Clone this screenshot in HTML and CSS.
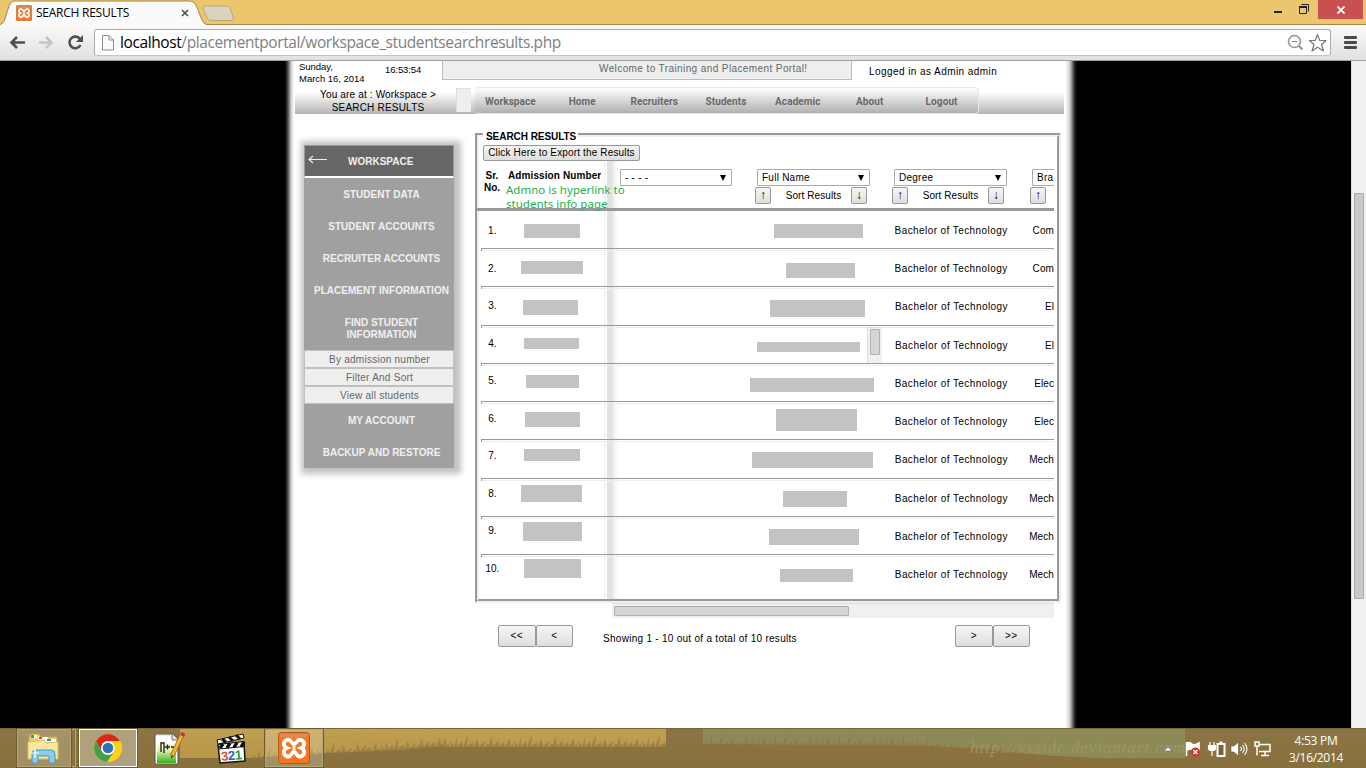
FILE: index.html
```html
<!DOCTYPE html>
<html lang="en">
<head>
<meta charset="utf-8">
<title>SEARCH RESULTS</title>
<link rel="stylesheet" href="styles.css">
</head>
<body>
<svg width="0" height="0" class="defs" aria-hidden="true">
  <symbol id="xampp" viewBox="0 0 32 32">
    <rect x=".5" y=".5" width="31" height="31" rx="3" fill="#f37623" stroke="#b5561b"/>
    <path d="M2 2h28v3q-14 3-28 0z" fill="#d9935d" opacity=".7"/>
    <path d="M9 8C13 6.500 13.500 12 16 12S19 6.500 23 8C28 10 26 15 23.500 16C26 17 28 22 23 24.500C19 26 18.500 20 16 20S13 26 9 24.500C4 22 6 17 8.500 16C6 15 4 10 9 8Z" fill="none" stroke="#fff" stroke-width="3.800"/>
    <path d="M14.500 16h3" stroke="#fff" stroke-width="4.500"/>
  </symbol>
</svg>
<div class="browser">
  <header class="tabstrip">
    <svg class="tabshape" width="240" height="25" viewBox="0 0 240 25">
      <path d="M0 24.500Q3 24 4.500 20L9 6Q11 1 14 1H190Q194 1 196 5L202 20Q204 24.500 207 24.500V26H0Z" fill="#fafafa" stroke="#a58748"/>
      <path d="M203 8Q203 6 205 6H227Q229 6 230 8L233.500 18Q234 20.500 232 20.500H211Q208 20.500 207 18Z" fill="#d8d3c1" stroke="#b9a878"/>
    </svg>
    <div class="tab">
      <svg width="16" height="16"><use href="#xampp"/></svg>
      <span class="tabtitle">SEARCH RESULTS</span>
      <svg class="tabclose" width="8" height="8" viewBox="0 0 8 8"><path d="M1 1l6 6M7 1L1 7" stroke="#555" stroke-width="1.700"/></svg>
    </div>
    <div class="winbtns">
      <svg width="35" height="19" viewBox="0 0 35 19"><path d="M0 12h8" stroke="#222" stroke-width="2"/><path d="M25.500 6.500h7v7h-7v-7z M27.500 4.500h7V11.500" fill="none" stroke="#222"/><path d="M25 7h8" stroke="#222" stroke-width="2"/></svg>
      <div class="winclose"><svg width="8" height="8" viewBox="0 0 8 8"><path d="M.5.5l7 7M7.500.5l-7 7" stroke="#fff" stroke-width="1.800"/></svg></div>
    </div>
  </header>
  <div class="toolbar">
    <svg width="84" height="36" viewBox="0 0 84 36">
      <path d="M17 12l-5.500 5.500L17 23M12 17.500h13" fill="none" stroke="#505050" stroke-width="2.600"/>
      <path d="M46 12l5.500 5.500L46 23M51 17.500H39" fill="none" stroke="#c6c6c6" stroke-width="2.600"/>
      <path d="M80 14A5.800 5.800 0 1 0 80.500 20" fill="none" stroke="#505050" stroke-width="2.600"/><path d="M83 10v7h-7z" fill="#505050"/>
    </svg>
    <div class="omnibox">
      <svg width="12" height="16" viewBox="0 0 12 16"><path d="M.5.5h6.500l4.500 4.500v10H.5zM7 .5V5h4.500" fill="#fbfbfb" stroke="#8d8d8d"/></svg>
      <div class="url"><b>localhost</b>/placementportal/workspace_studentsearchresults.php</div>
      <svg width="40" height="20" viewBox="0 0 40 20"><circle cx="7.500" cy="8.500" r="6" fill="#fafafa" stroke="#999" stroke-width="1.600"/><path d="M12 13l3.500 3.500" stroke="#999" stroke-width="2.400"/><path d="M5 8.500h5" stroke="#888"/><path d="M30.500 1.500l2.300 6H39l-4.500 4 2 6.500-6-3.800-5.500 3.800 2-6.500-4.500-4h5.700z" fill="#fff" stroke="#777" stroke-width="1.200" stroke-linejoin="round"/></svg>
    </div>
    <div class="menu"><i></i><i></i><i></i></div>
  </div>

  <div class="viewport">
    <main class="page">
      <div class="top">
        <div class="toprow">
          <div class="date">Sunday,<br>March 16, 2014</div>
          <div class="time">16:53:54</div>
          <div class="welcome">Welcome to Training and Placement Portal!</div>
          <div class="logged">Logged in as Admin admin</div>
        </div>
        <div class="navrow">
          <div class="crumbs"><span class="c1">You are at : Workspace &gt;</span><span class="c2">SEARCH RESULTS</span></div>
          <div class="stub"></div>
          <nav class="nav"><a>Workspace</a><a>Home</a><a>Recruiters</a><a>Students</a><a>Academic</a><a>About</a><a>Logout</a></nav>
        </div>
      </div>
      <div class="main">
        <aside class="side">
          <div class="sidehead"><svg width="19" height="9" viewBox="0 0 19 9"><path d="M19 4.500H1M5 1L1 4.500 5 8" fill="none" stroke="#eee" stroke-width="1.200"/></svg><span>WORKSPACE</span></div>
          <a>STUDENT DATA</a><a>STUDENT ACCOUNTS</a><a>RECRUITER ACCOUNTS</a><a>PLACEMENT INFORMATION</a>
          <a class="two">FIND STUDENT<br>INFORMATION</a>
          <div class="sub">By admission number</div><div class="sub">Filter And Sort</div><div class="sub">View all students</div>
          <a>MY ACCOUNT</a><a>BACKUP AND RESTORE</a>
        </aside>
        <div class="content">
          <section class="frame"><div class="inner">
            <div class="legend">SEARCH RESULTS</div>
            <button class="export">Click Here to Export the Results</button>
            <div class="thead">
              <div class="sr">Sr.<br>No.</div>
              <div class="adm">Admission Number<div class="note">Admno is hyperlink to<br>students info page</div></div>
              <div class="cols">
                <div class="col first"><div class="select"><span class="dash">- - - -</span><i></i></div></div>
                <div class="col"><div class="select"><span>Full Name</span><i></i></div><div class="sort"><b>↑</b><span>Sort Results</span><b>↓</b></div></div>
                <div class="col"><div class="select"><span>Degree</span><i></i></div><div class="sort"><b>↑</b><span>Sort Results</span><b>↓</b></div></div>
                <div class="col last"><div class="select"><span>Bra</span></div><div class="sort"><b>↑</b></div></div>
              </div>
            </div>
            <div class="rows">
              <div class="row"><span class="num" style="--t:0px">1.</span><i class="bar" style="--x:43px;--y:13px;--w:56px;--h:14px"></i><i class="bar" style="--x:293px;--y:13px;--w:89px;--h:14px"></i><span class="deg">Bachelor of Technology</span><span class="br" style="--x:5px">Com</span></div>
              <div class="row"><span class="num" style="--t:0px">2.</span><i class="bar" style="--x:40px;--y:12px;--w:62px;--h:13px"></i><i class="bar" style="--x:305px;--y:14px;--w:69px;--h:15px"></i><span class="deg">Bachelor of Technology</span><span class="br" style="--x:5px">Com</span></div>
              <div class="row tall"><span class="num" style="--t:-1px">3.</span><i class="bar" style="--x:42px;--y:13px;--w:55px;--h:15px"></i><i class="bar" style="--x:289px;--y:13px;--w:95px;--h:17px"></i><span class="deg">Bachelor of Technology</span><span class="br" style="--x:15px">El</span></div>
              <div class="row"><span class="num" style="--t:-2px">4.</span><i class="bar" style="--x:43px;--y:12px;--w:55px;--h:11px"></i><i class="bar" style="--x:276px;--y:16px;--w:103px;--h:10px"></i><div class="ministroll"><i></i></div><span class="deg">Bachelor of Technology</span><span class="br" style="--x:15px">El</span></div>
              <div class="row"><span class="num" style="--t:-3px">5.</span><i class="bar" style="--x:45px;--y:11px;--w:53px;--h:13px"></i><i class="bar" style="--x:269px;--y:14px;--w:124px;--h:14px"></i><span class="deg">Bachelor of Technology</span><span class="br" style="--x:6px">Elec</span></div>
              <div class="row"><span class="num" style="--t:-3px">6.</span><i class="bar" style="--x:44px;--y:10px;--w:55px;--h:15px"></i><i class="bar" style="--x:295px;--y:7px;--w:81px;--h:22px"></i><span class="deg">Bachelor of Technology</span><span class="br" style="--x:6px">Elec</span></div>
              <div class="row tall"><span class="num" style="--t:-4px">7.</span><i class="bar" style="--x:43px;--y:9px;--w:56px;--h:12px"></i><i class="bar" style="--x:271px;--y:12px;--w:121px;--h:16px"></i><span class="deg">Bachelor of Technology</span><span class="br" style="--x:0px">Mech</span></div>
              <div class="row"><span class="num" style="--t:-5px">8.</span><i class="bar" style="--x:40px;--y:6px;--w:61px;--h:17px"></i><i class="bar" style="--x:302px;--y:12px;--w:64px;--h:16px"></i><span class="deg">Bachelor of Technology</span><span class="br" style="--x:0px">Mech</span></div>
              <div class="row"><span class="num" style="--t:-6px">9.</span><i class="bar" style="--x:42px;--y:5px;--w:59px;--h:19px"></i><i class="bar" style="--x:288px;--y:12px;--w:90px;--h:16px"></i><span class="deg">Bachelor of Technology</span><span class="br" style="--x:0px">Mech</span></div>
              <div class="row end"><span class="num" style="--t:-6px">10.</span><i class="bar" style="--x:43px;--y:4px;--w:57px;--h:19px"></i><i class="bar" style="--x:299px;--y:14px;--w:73px;--h:13px"></i><span class="deg">Bachelor of Technology</span><span class="br" style="--x:0px">Mech</span></div>
            </div>
          </div></section>
          <div class="hscroll"><i></i></div>
          <div class="pager"><button>&lt;&lt;</button><button>&lt;</button><span>Showing 1 - 10 out of a total of 10 results</span><button>&gt;</button><button>&gt;&gt;</button></div>
        </div>
      </div>
    </main>
    <div class="vscroll"><i></i></div>
  </div>

  <footer class="taskbar">
    <svg class="scene" width="1366" height="40" viewBox="0 0 1366 40">
      <defs>
        <linearGradient id="sky" x2="0" y2="1"><stop stop-color="#c09f50"/><stop offset="1" stop-color="#b8964a"/></linearGradient>
        <pattern id="blades" width="64" height="22" patternUnits="userSpaceOnUse"><path d="M0 22V15L3 18 2 12 6 17 9 9 9 17 14 13 15 18 20 5 19 17 25 13 26 18 29 10 31 17 38 12 35 18 42 14 43 7 45 17 51 11 50 17 56 13 57 18 62 9 62 17 64 15V22Z" fill="#8c7440" opacity=".65"/></pattern>
      </defs>
      <path d="M180 0H666V18L430 18 400 21 330 24 250 29H180Z" fill="url(#sky)"/>
      <rect x="440" width="226" height="22" fill="url(#blades)"/>
      <g transform="translate(250 13) rotate(-4)"><rect width="192" height="22" fill="url(#blades)"/></g>
      <path d="M703 0H1185V29H1100L1040 26 980 20 930 17 703 15Z" fill="#8c8b58"/>
      <g transform="translate(703 -1)"><rect width="207" height="22" fill="url(#blades)"/></g>
      <g transform="translate(910 -1) rotate(5)"><rect width="100" height="22" fill="url(#blades)"/></g>
    </svg>
    <div class="tasks">
      <div class="task explorer"><svg width="32" height="32" viewBox="0 0 32 32"><path d="M2 5q0-3 3-3h7l2 3h16v21H2z" fill="#e8cf73" stroke="#c2a654"/><path d="M4 3h6v3H4z" fill="#fff"/><path d="M4 3h3v3H4z" fill="#20b23b"/><path d="M11 5h10v3H11z" fill="#fff"/><path d="M12 5h3v2h-3z" fill="#d84a2b"/><path d="M18 7h11v3H18z" fill="#fff"/><path d="M20 7h4v2h-4z" fill="#2785d8"/><path d="M1 10l16-2 2 3 12-1v17H1z" fill="#f8e69b" stroke="#d9bf6b"/><path d="M5 31V22q0-4 4-4h15q4 0 4 4v9h-6v-7H11v7z" fill="#8bcde9" stroke="#4a98bd"/><path d="M8 16v10M4 21h8" stroke="#fff" stroke-width="1.200"/></svg></div>
      <div class="stack"></div>
      <div class="task active"><svg width="30" height="30" viewBox="0 0 30 30"><circle cx="15" cy="15" r="14" fill="#ffd116"/><path d="M2.900 8A14 14 0 0 1 27.100 8H15A7 7 0 0 0 9 18.500Z" fill="#d9281e"/><path d="M2.900 8A14 14 0 0 0 14 29L21 18.500A7 7 0 0 1 9 18.500Z" fill="#3fa24a"/><circle cx="15" cy="15" r="6.800" fill="#fff"/><circle cx="15" cy="15" r="5.300" fill="#2d72bd"/></svg></div>
      <svg class="npp" width="31" height="33" viewBox="0 0 31 33"><defs><linearGradient id="lime" x2="0" y2="1"><stop stop-color="#fff"/><stop offset=".4" stop-color="#e4f6b0"/><stop offset="1" stop-color="#3bae1c"/></linearGradient></defs><path d="M1 2h18l5 5v25H1z" fill="#fff" stroke="#555"/><path d="M3 9h19v22H3z" fill="url(#lime)"/><path d="M2 2.500h17" stroke="#999" stroke-dasharray="1 1.500" stroke-width="2"/><path d="M18 2v6h6" fill="#ddd" stroke="#777"/><path d="M7 20v-9h3v10M11 15h5M13.500 12.500v5M17 15h3" stroke="#222" fill="none" stroke-width="1.400"/><path d="M28 3L18 24" stroke="#9f6318" stroke-width="4.600"/><path d="M28 3L18 24" stroke="#f2b331" stroke-width="3"/><path d="M29.500 1L28 4" stroke="#a44038" stroke-width="4"/><path d="M17 27l.5-4 2 1z" fill="#333"/></svg>
      <div class="clapper"><svg width="31" height="32" viewBox="0 0 31 32"><path d="M1 7L27 1l1 4L2 11z" fill="#fff" stroke="#111"/><path d="M6 6l4 3M13 4l4 4M20 2l4 4" stroke="#111" stroke-width="3"/><path d="M2 12L28 9l1 19-25 2z" fill="#fff" stroke="#111" stroke-width="1.500"/><path d="M2 11.500L28 8.500v5L3 16z" fill="#fff" stroke="#111"/><path d="M7 11l-3 4M14 10l-3 5M21 9.500l-3 5M28 9l-3 5" stroke="#111" stroke-width="3.400"/></svg><span><b>3</b><b>2</b><b>1</b></span></div>
      <div class="task xa"><svg width="32" height="32"><use href="#xampp"/></svg></div>
    </div>
    <div class="mark">http://vxside.deviantart.com</div>
    <svg class="tray" width="108" height="18" viewBox="0 0 108 18">
      <path d="M0 11l4-4 4 4z" fill="#fff" stroke="#555" stroke-width=".5"/>
      <path d="M22.500 2v14M23 3q3-1 5 1t7-1v7q-4 1-6-.5T23 10" stroke="#fff" stroke-width="1.600" fill="#fff"/><circle cx="31.500" cy="12" r="4.500" fill="#d92f26"/><path d="M29.500 10l4 4M33.500 10l-4 4" stroke="#fff" stroke-width="1.500"/>
      <path d="M46 2v3M50 2v3M44.500 5.500h7v3q0 2-3.500 2-3.500 0-3.500-2zM48 10v6" stroke="#fff" fill="#fff" stroke-width="1.200"/><path d="M53.500 4h7v12h-7zM55.500 2.500h3" fill="#7a6335" stroke="#fff" stroke-width="2"/>
      <path d="M67 6h3l4.500-4v14L70 12h-3z" fill="#fff" stroke="#514a30" stroke-width=".5"/><path d="M76.500 7q2 2 0 4M78.500 5q3.500 4 0 8M80.500 3q5 6 0 12" fill="none" stroke="#fff" stroke-width="1.100"/>
      <path d="M96 4.500h10v7H95M101 12v3M97 15.500h8M91 2h4v4h-4zM93 6v9.500" fill="none" stroke="#fff" stroke-width="1.500"/>
    </svg>
    <div class="clock">4:53 PM<br>3/16/2014</div>
  </footer>
</div>
</body>
</html>
```
FILE: styles.css
```css
* { box-sizing: border-box; }
body { margin: 0; width: 1366px; height: 768px; overflow: hidden; font: 10px/12px "Liberation Sans", Arial, sans-serif; letter-spacing: .4px; color: #000; }
svg { display: block; flex: none; }
i { font-style: normal; }
.defs { position: absolute; }
.browser { display: flex; flex-direction: column; height: 768px; background: #000; }

/* window chrome */
.tabstrip { height: 25px; background: #ebc66d; border-bottom: 1px solid #a58748; display: flex; justify-content: space-between; position: relative; z-index: 1; }
.tabshape { position: absolute; left: 0; top: 0; }
.tab { display: flex; align-items: center; position: relative; width: 200px; padding: 2px 0 0 16px; }
.tabtitle { font: 12px/16px "Open Sans", sans-serif; letter-spacing: -.25px; margin-left: 4px; width: 145px; }
.winbtns { display: flex; }
.winclose { width: 45px; height: 19px; margin: 0 3px 0 9px; background: #c75050; display: flex; align-items: center; justify-content: center; }
.toolbar { height: 36px; background: linear-gradient(#fafafa, #e1e1e1); border-bottom: 1px solid #a0a0a0; display: flex; flex: none; }
.omnibox { margin: 4px 0 0 10px; width: 1237px; height: 27px; border: 1px solid #aaa; border-bottom-color: #c4c4c4; border-radius: 3px; background: #fff; display: flex; align-items: center; padding: 0 3px 0 7px; }
.url { flex: 1; margin-left: 6px; font: 15.5px/22px "Open Sans", sans-serif; letter-spacing: -.4px; color: #808080; white-space: nowrap; padding-bottom: 2px; }
.url b { font-weight: 400; color: #000; }
.menu { margin: 11px 0 0 13px; display: flex; flex-direction: column; gap: 2px; }
.menu i { width: 13px; height: 3px; border-radius: 1px; background: #4a4a4a; }

/* page */
.viewport { height: 667px; flex: none; display: flex; justify-content: space-between; background: #000; padding-left: 285px; }
.page { width: 793px; padding: 0 14px 0 10px; background: linear-gradient(90deg, #000, #333 2px, #777 4px, #ccc 6px, #fff 9px, #fff 780px, #ddd 784px, #888 787px, #333 789px, #000 792px); }
.top { height: 53px; background: linear-gradient(transparent 31px, #b5b5b5 53px); }
.toprow { height: 26px; display: flex; }
.date { width: 86px; padding-left: 4px; font-size: 9.5px; letter-spacing: -.03px; }
.time { width: 61px; padding: 3px 0 0 4px; font-size: 9.5px; letter-spacing: -.1px; }
.welcome { width: 410px; height: 19px; padding: 2px 0 0 156px; border: 1px solid #bbb; border-top: 0; background: #eee; color: #666; white-space: nowrap; }
.logged { padding: 5px 0 0 17px; letter-spacing: .43px; }
.navrow { display: flex; height: 27px; }
.crumbs { width: 161px; padding: 2px 0 0 5px; text-align: center; display: flex; flex-direction: column; }
.c1 { letter-spacing: .16px; }
.c2 { line-height: 14px; letter-spacing: .2px; }
.stub { width: 15px; height: 24px; margin: 1px 4px 0 0; background: #eee; border: 1px solid #ddd; border-width: 1px 0 0 1px; }
.nav { width: 504px; height: 27px; border: 1px solid #e8e8e8; border-left: 0; border-radius: 4px; background: linear-gradient(#fff, #b0b0b0); display: flex; font: 700 10px/28px Roboto, sans-serif; color: #696969; letter-spacing: .1px; }
.nav a { flex: 1; text-align: center; padding-right: 1px; }
.main { display: flex; }

/* side menu */
.side { width: 150px; height: 323px; margin: 31px 21px 0 9px; background: #a0a0a0; box-shadow: 2px 1px 6px 5px #c2c2c2; color: #f0f0f0; font-weight: 700; text-align: center; letter-spacing: 0; }
.side a { display: block; height: 32px; line-height: 34px; padding-left: 5px; white-space: nowrap; }
.side .two { line-height: 12px; padding-top: 11px; height: 44px; }
.sidehead { display: flex; height: 33px; padding: 0 0 0 3px; background: #666; border: 1px solid #999; border-bottom: 2px solid #fff; }
.sidehead svg { margin-top: 9px; }
.sidehead span { margin-left: 21px; line-height: 31px; }
.sub { height: 18px; border: 1px solid #c0c0c0; background: #eee; color: #666; font-weight: 400; line-height: 17px; letter-spacing: .25px; padding-left: 1px; }

/* results */
.content { width: 586px; margin-top: 19px; }
.frame { height: 470px; border: 2px solid; border-color: #999 #eee #eee #999; }
.inner { height: 466px; border: 2px solid; border-color: #eee #999 #999 #eee; background: linear-gradient(90deg, #f4f4f4 2px, #fff 2px 3px, #e2e2e2 3px 8px, #f2f2f2 10px, #fff 14px) 125px 24px / 14px 450px no-repeat; }
.legend { width: 95px; height: 14px; margin: -7px 0 0 4px; padding-left: 3px; background: #fff; font-weight: 700; line-height: 14px; letter-spacing: -.05px; white-space: nowrap; position: relative; }
button { font: 10px/12px "Liberation Sans", Arial, sans-serif; letter-spacing: .36px; color: #000; border: 1px solid #999; border-radius: 2px; background: linear-gradient(#f6f6f6, #dedede); padding: 0; }
.export { display: block; width: 157px; height: 16px; margin: 1px 0 0 4px; letter-spacing: .15px; white-space: nowrap; }
.thead { display: flex; height: 50px; padding-top: 9px; margin: 0 3px 0 -2px; border-bottom: 3px solid #999; }
.sr { width: 30px; text-align: center; font-weight: 700; letter-spacing: 0; }
.adm { width: 105px; padding-left: 1px; font-weight: 700; letter-spacing: .1px; }
.adm { position: relative; }
.note { position: absolute; left: -1px; top: 12.5px; width: 140px; font: 400 11.5px/14px "Noto Sans", sans-serif; letter-spacing: .02px; color: #22b14c; }
.cols { display: flex; width: 442px; overflow: hidden; margin-top: -1px; }
.col { width: 137px; flex: none; }
.col.first { width: 143px; padding-left: 6px; }
.col.last { width: 40px; margin-left: 1px; }
.select { width: 113px; height: 17px; margin: 0 0 1px 2px; border: 1px solid #aaa; border-radius: 1px; background: #fff; display: flex; align-items: center; justify-content: space-between; padding: 0 5px 0 4px; letter-spacing: .25px; }
.first .select { width: 112px; }
.last .select { width: 60px; }
.select i { border: 3.5px solid transparent; border-top: 6px solid #000; border-bottom: 0; }
.sort { width: 112px; display: flex; justify-content: space-between; line-height: 18px; letter-spacing: .1px; }
.sort span { padding-left: 5px; }
.sort b { width: 16px; height: 17px; border: 1px solid #999; border-radius: 2px; background: linear-gradient(#f6f6f6, #dedede); text-align: center; font-weight: 400; font-size: 12px; line-height: 15px; }
.rows { margin: 0 3px 0 2px; }
.row { height: 38px; border-bottom: 1px solid #999; position: relative; overflow: hidden; line-height: 12px; }
.row + .row { background: linear-gradient(#999, #999) 0 0 / 1px 2px no-repeat, linear-gradient(#eee, #eee) 0 1px / 100% 1px no-repeat; }
.row.tall { height: 39px; }
.row.end { border: 0; height: 44px; }
.row { display: flex; padding-top: 14px; }
.num { width: 23px; text-align: center; margin-top: var(--t); letter-spacing: 0; }
.bar { position: absolute; left: var(--x); top: var(--y); width: var(--w); height: var(--h); background: #c3c3c3; }
.deg { margin-left: 391px; width: 135px; white-space: nowrap; letter-spacing: .42px; }
.br { padding-left: var(--x); margin-left: .5px; letter-spacing: .1px; }
.ministroll { position: absolute; left: 386px; top: 1px; width: 15px; height: 37px; padding: 1px 0 0 2px; background: #f0f0f0; border: 1px solid #ddd; border-width: 1px 0 0 1px; }
.ministroll i, .hscroll i, .vscroll i { display: block; background: #d6d6d6; border: 1px solid #b0b0b0; border-radius: 1px; }
.ministroll i { width: 10px; height: 26px; }
.hscroll { width: 442px; height: 15px; margin-left: 137px; padding: 3px 2px; background: #f0f0f0; border-top: 1px solid #ddd; }
.hscroll i { width: 235px; height: 10px; margin-top: -1px; }
.pager { display: flex; margin: 7px 0 0 23px; height: 22px; }
.pager button { width: 37.5px; height: 22px; }
.pager span { width: 382px; padding: 8px 0 0 30px; letter-spacing: .28px; white-space: nowrap; }
.vscroll { width: 15px; background: #f1f1f1; border-left: 1px solid #ddd; padding: 132px 0 0 2px; }
.vscroll i { width: 10px; height: 406px; background: #c9c9c9; border-color: #aaa; }

/* taskbar */
.taskbar { height: 40px; flex: none; position: relative; background: linear-gradient(#8c7543, #87703c); border-top: 1px solid #7a6538; display: flex; }
.scene { position: absolute; left: 0; top: 0; }
.tasks { position: relative; display: flex; padding-left: 17px; width: 970px; }
.task { width: 54px; height: 38px; border: 1px solid #b6a57b; background: rgba(255,255,240,.22); display: flex; align-items: center; justify-content: center; outline: 1px solid #6f5b30; outline-offset: 0; }
.stack { width: 4px; height: 38px; border: 1px solid #b6a57b; border-left: 0; margin: 0 3px 0 1px; }
.task.active { width: 58px; border-color: #fff; background: #afa17d; }
.npp { margin: 3px 0 0 18px; }
.clapper { margin: 4px 0 0 31px; width: 31px; position: relative; }
.clapper span { position: absolute; left: 5px; top: 16px; font: 700 13px/13px "Liberation Sans", sans-serif; letter-spacing: -.3px; transform: rotate(-5deg); }
.clapper b:nth-child(1) { color: #d4552a; }
.clapper b:nth-child(2) { color: #2a63b8; }
.clapper b:nth-child(3) { color: #2a9a35; }
.task.xa { width: 58px; margin-left: 17px; }
.explorer svg, .npp, .clapper { transform: translateX(-1px); }
.mark { position: relative; width: 194px; font: italic 17px/38px "Liberation Serif", serif; letter-spacing: .9px; color: #a39360; white-space: nowrap; }
.tray { position: relative; margin: 11px 0 0 0; }
.clock { position: relative; width: 88px; margin-left: 0; text-align: center; color: #fff; font: 12px/17px "Open Sans", sans-serif; letter-spacing: -.3px; padding: 3px 0 0; }
```
